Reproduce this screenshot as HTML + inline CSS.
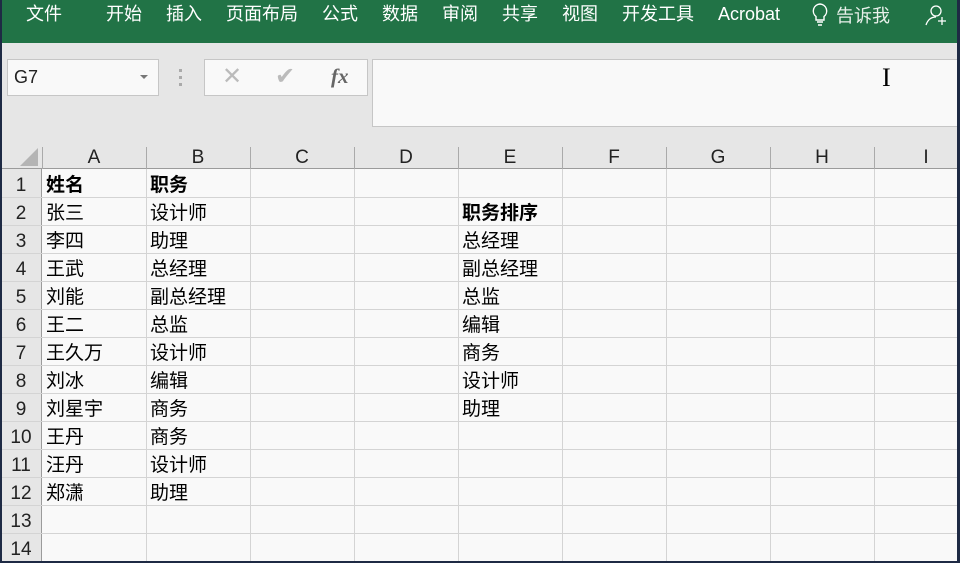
<!DOCTYPE html>
<html><head><meta charset="utf-8"><style>
*{margin:0;padding:0;box-sizing:border-box}
body{width:960px;height:563px;overflow:hidden;background:#e6e6e6;position:relative;font-family:"Liberation Sans","Noto Sans CJK SC",sans-serif}
.abs{position:absolute}
#rib{left:0;top:0;width:960px;height:43px;background:#217346}
.tab{position:absolute;top:1px;color:#fff;font-size:18px;line-height:26px;white-space:nowrap}
.box{position:absolute;background:#f9f9f9;border:1px solid #c6c6c6}
.cell{position:absolute;font-size:19px;color:#000;white-space:nowrap;line-height:28px;top:0}
.hd{position:absolute;font-size:19px;color:#222;text-align:center;line-height:26px}
</style></head><body>
<div id="rib" class="abs"></div>
<div class="tab" style="left:26px">文件</div>
<div class="tab" style="left:106px">开始</div>
<div class="tab" style="left:166px">插入</div>
<div class="tab" style="left:226px">页面布局</div>
<div class="tab" style="left:322px">公式</div>
<div class="tab" style="left:382px">数据</div>
<div class="tab" style="left:442px">审阅</div>
<div class="tab" style="left:502px">共享</div>
<div class="tab" style="left:562px">视图</div>
<div class="tab" style="left:622px">开发工具</div>
<div class="tab" style="left:718px;top:1px">Acrobat</div>
<svg class="abs" style="left:810px;top:3px" width="20" height="24" viewBox="0 0 20 24"><path d="M10 1a7 7 0 0 0-4 12.5V17h8v-3.5A7 7 0 0 0 10 1zM7 19h6M8 22h4" fill="none" stroke="#fff" stroke-width="1.4"/></svg>
<div class="tab" style="left:836px;top:3px;color:#e8f0ea">告诉我</div>
<svg class="abs" style="left:924px;top:4px" width="26" height="24" viewBox="0 0 26 24"><circle cx="12" cy="7" r="5" fill="none" stroke="#fff" stroke-width="1.3"/><path d="M2 21c2-6 6-8 10-8M14 17h8M18 13v8" fill="none" stroke="#fff" stroke-width="1.3"/></svg>

<div class="box" style="left:7px;top:59px;width:152px;height:37px"></div>
<div class="abs" style="left:14px;top:67px;font-size:18px;color:#222">G7</div>
<div class="abs" style="left:140px;top:75px;border:4px solid transparent;border-top:4px solid #777"></div>
<div class="abs" style="left:179px;top:69px;width:3px;height:17px;border-left:3px dotted #aaa"></div>
<div class="box" style="left:204px;top:59px;width:164px;height:37px"></div>
<div class="abs" style="left:222px;top:62px;font-size:24px;color:#bbb">✕</div>
<div class="abs" style="left:275px;top:62px;font-size:24px;color:#bbb">✔</div>
<div class="abs" style="left:331px;top:64px;font-size:21px;color:#666;font-style:italic;font-family:'Liberation Serif',serif;font-weight:bold">fx</div>
<div class="box" style="left:372px;top:59px;width:600px;height:68px"></div>
<div class="abs" style="left:882px;top:63px;font-size:26px;color:#000;font-family:'Liberation Serif',serif">I</div>

<div class="abs" style="left:0;top:143px;width:960px;height:420px;background:#f9f9f9"></div>
<div class="abs" style="left:0;top:143px;width:960px;height:26px;background:#e6e6e6;border-bottom:1px solid #9b9b9b"></div>
<div class="abs" style="left:0;top:169px;width:42px;height:394px;background:#e6e6e6;border-right:1px solid #9b9b9b"></div>
<svg class="abs" style="left:18px;top:146px" width="22" height="20"><path d="M20 2V20H2Z" fill="#b4b4b4"/></svg>
<svg class="abs" style="left:0;top:143px" width="960" height="420">
<g stroke="#d4d4d4" stroke-width="1">
<line x1="146.5" y1="26" x2="146.5" y2="420"/><line x1="250.5" y1="26" x2="250.5" y2="420"/><line x1="354.5" y1="26" x2="354.5" y2="420"/><line x1="458.5" y1="26" x2="458.5" y2="420"/><line x1="562.5" y1="26" x2="562.5" y2="420"/><line x1="666.5" y1="26" x2="666.5" y2="420"/><line x1="770.5" y1="26" x2="770.5" y2="420"/><line x1="874.5" y1="26" x2="874.5" y2="420"/>
<line x1="0" y1="54.5" x2="960" y2="54.5"/><line x1="0" y1="82.5" x2="960" y2="82.5"/><line x1="0" y1="110.5" x2="960" y2="110.5"/><line x1="0" y1="138.5" x2="960" y2="138.5"/><line x1="0" y1="166.5" x2="960" y2="166.5"/><line x1="0" y1="194.5" x2="960" y2="194.5"/><line x1="0" y1="222.5" x2="960" y2="222.5"/><line x1="0" y1="250.5" x2="960" y2="250.5"/><line x1="0" y1="278.5" x2="960" y2="278.5"/><line x1="0" y1="306.5" x2="960" y2="306.5"/><line x1="0" y1="334.5" x2="960" y2="334.5"/><line x1="0" y1="362.5" x2="960" y2="362.5"/><line x1="0" y1="390.5" x2="960" y2="390.5"/>
</g>
<g stroke="#aaa"><line x1="146.5" y1="4" x2="146.5" y2="26"/><line x1="250.5" y1="4" x2="250.5" y2="26"/><line x1="354.5" y1="4" x2="354.5" y2="26"/><line x1="458.5" y1="4" x2="458.5" y2="26"/><line x1="562.5" y1="4" x2="562.5" y2="26"/><line x1="666.5" y1="4" x2="666.5" y2="26"/><line x1="770.5" y1="4" x2="770.5" y2="26"/><line x1="874.5" y1="4" x2="874.5" y2="26"/><line x1="42.5" y1="4" x2="42.5" y2="26"/></g>
</svg>
<div class="hd" style="left:42px;top:145px;width:104px">A</div>
<div class="hd" style="left:146px;top:145px;width:104px">B</div>
<div class="hd" style="left:250px;top:145px;width:104px">C</div>
<div class="hd" style="left:354px;top:145px;width:104px">D</div>
<div class="hd" style="left:458px;top:145px;width:104px">E</div>
<div class="hd" style="left:562px;top:145px;width:104px">F</div>
<div class="hd" style="left:666px;top:145px;width:104px">G</div>
<div class="hd" style="left:770px;top:145px;width:104px">H</div>
<div class="hd" style="left:874px;top:145px;width:104px">I</div>

<div class="hd" style="left:0;top:173px;width:42px">1</div>
<div class="hd" style="left:0;top:201px;width:42px">2</div>
<div class="hd" style="left:0;top:229px;width:42px">3</div>
<div class="hd" style="left:0;top:257px;width:42px">4</div>
<div class="hd" style="left:0;top:285px;width:42px">5</div>
<div class="hd" style="left:0;top:313px;width:42px">6</div>
<div class="hd" style="left:0;top:341px;width:42px">7</div>
<div class="hd" style="left:0;top:369px;width:42px">8</div>
<div class="hd" style="left:0;top:397px;width:42px">9</div>
<div class="hd" style="left:0;top:425px;width:42px">10</div>
<div class="hd" style="left:0;top:453px;width:42px">11</div>
<div class="hd" style="left:0;top:481px;width:42px">12</div>
<div class="hd" style="left:0;top:509px;width:42px">13</div>
<div class="hd" style="left:0;top:537px;width:42px">14</div>

<div style="position:absolute;left:0;top:172px;width:960px;height:0">
<div class="cell" style="left:46px;font-weight:bold">姓名</div>
<div class="cell" style="left:150px;font-weight:bold">职务</div>
<div class="cell" style="left:46px;top:28px">张三</div><div class="cell" style="left:150px;top:28px">设计师</div>
<div class="cell" style="left:46px;top:56px">李四</div><div class="cell" style="left:150px;top:56px">助理</div>
<div class="cell" style="left:46px;top:84px">王武</div><div class="cell" style="left:150px;top:84px">总经理</div>
<div class="cell" style="left:46px;top:112px">刘能</div><div class="cell" style="left:150px;top:112px">副总经理</div>
<div class="cell" style="left:46px;top:140px">王二</div><div class="cell" style="left:150px;top:140px">总监</div>
<div class="cell" style="left:46px;top:168px">王久万</div><div class="cell" style="left:150px;top:168px">设计师</div>
<div class="cell" style="left:46px;top:196px">刘冰</div><div class="cell" style="left:150px;top:196px">编辑</div>
<div class="cell" style="left:46px;top:224px">刘星宇</div><div class="cell" style="left:150px;top:224px">商务</div>
<div class="cell" style="left:46px;top:252px">王丹</div><div class="cell" style="left:150px;top:252px">商务</div>
<div class="cell" style="left:46px;top:280px">汪丹</div><div class="cell" style="left:150px;top:280px">设计师</div>
<div class="cell" style="left:46px;top:308px">郑潇</div><div class="cell" style="left:150px;top:308px">助理</div>
<div class="cell" style="left:462px;top:28px;font-weight:bold">职务排序</div>
<div class="cell" style="left:462px;top:56px">总经理</div>
<div class="cell" style="left:462px;top:84px">副总经理</div>
<div class="cell" style="left:462px;top:112px">总监</div>
<div class="cell" style="left:462px;top:140px">编辑</div>
<div class="cell" style="left:462px;top:168px">商务</div>
<div class="cell" style="left:462px;top:196px">设计师</div>
<div class="cell" style="left:462px;top:224px">助理</div>
</div>

<div class="abs" style="left:0;top:0;width:2px;height:563px;background:#1e2a44"></div>
<div class="abs" style="left:957px;top:0;width:3px;height:563px;background:#1e2a44"></div>
<div class="abs" style="left:0;top:561px;width:960px;height:2px;background:#1e2a44"></div>
</body></html>
